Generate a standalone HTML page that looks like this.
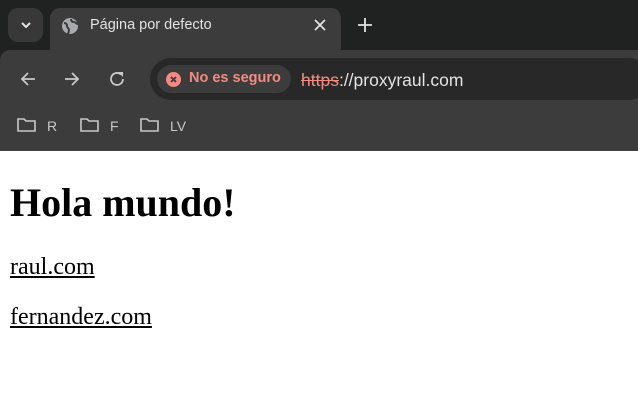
<!DOCTYPE html>
<html><head><style>
*{margin:0;padding:0;box-sizing:border-box}
body{width:638px;height:411px;overflow:hidden;background:#fff;position:relative;font-family:"Liberation Sans",sans-serif}
.top{position:absolute;left:0;top:0;width:638px;height:70px;background:#202121}
.dd{position:absolute;left:8px;top:8px;width:35px;height:34px;border-radius:10px;background:#383838}
.tab{position:absolute;left:50px;top:8px;width:291px;height:50px;border-radius:10px 10px 0 0;background:#3c3c3c}
.tb{position:absolute;left:0;top:50px;width:638px;height:100px;background:#3c3c3c;border-radius:10px 0 0 0}
.omni{position:absolute;left:150px;top:58px;width:500px;height:42px;border-radius:21px;background:#282828}
.chip{position:absolute;left:157px;top:65px;width:134px;height:28px;border-radius:14px;background:#3c3c3c}
.t{position:absolute;color:#e3e3e3;white-space:nowrap}
.line{position:absolute;left:0;top:150px;width:638px;height:1px;background:#444}
.page{position:absolute;font-family:"Liberation Serif",serif;color:#000;white-space:nowrap}
</style></head><body>
<div class="top"></div>
<div class="dd"></div>
<svg style="position:absolute;left:20px;top:19px" width="12" height="12"><path d="M2 4l4 4 4-4" stroke="#e3e3e3" stroke-width="2" fill="none"/></svg>
<div class="tb"></div>
<div class="tab"></div>
<svg style="position:absolute;left:61px;top:17px" width="18" height="18" viewBox="0 0 18 18"><circle cx="9" cy="9" r="8" fill="#a8abae"/><path d="M3 6c2 0 3 1 3 3s2 2 2 4-1 3-1 4M10 2c0 2 1 3 3 3s2 2 4 2" stroke="#3c3c3c" stroke-width="2" fill="none"/></svg>
<div class="t" style="left:90px;top:17px;font-size:14.5px">Página por defecto</div>
<svg style="position:absolute;left:314px;top:19px" width="12" height="12"><path d="M1 1l10 10M11 1L1 11" stroke="#e3e3e3" stroke-width="1.8"/></svg>
<svg style="position:absolute;left:358px;top:18px" width="14" height="14"><path d="M7 0v14M0 7h14" stroke="#e3e3e3" stroke-width="1.8"/></svg>
<svg style="position:absolute;left:19px;top:70px" width="18" height="18"><path d="M16 9H3M9 3L3 9l6 6" stroke="#c8c8c8" stroke-width="1.8" fill="none"/></svg>
<svg style="position:absolute;left:63px;top:70px" width="18" height="18"><path d="M2 9h13M9 3l6 6-6 6" stroke="#c8c8c8" stroke-width="1.8" fill="none"/></svg>
<svg style="position:absolute;left:108px;top:70px" width="18" height="18"><path d="M15 9a6 6 0 1 1-2-4.5" stroke="#c8c8c8" stroke-width="1.8" fill="none"/><path d="M10 2h5v5z" fill="#c8c8c8"/></svg>
<div class="omni"></div>
<div class="chip"></div>
<svg style="position:absolute;left:166px;top:72px" width="15" height="15"><circle cx="7.5" cy="7.5" r="7.5" fill="#f28b82"/><path d="M5 5l5 5M10 5l-5 5" stroke="#3c3c3c" stroke-width="1.8"/></svg>
<div class="t" style="left:189px;top:70px;font-size:14.5px;color:#f28b82;font-weight:bold">No es seguro</div>
<div class="t" style="left:301px;top:70px;font-size:17.5px"><span style="color:#f28b82;text-decoration:line-through">https</span>://proxyraul.com</div>
<svg style="position:absolute;left:17px;top:117px" width="20" height="16"><path d="M1 2h6l2 2h9v10H1z" stroke="#c8c8c8" stroke-width="1.6" fill="none"/></svg>
<div class="t" style="left:47px;top:118px;font-size:14px;color:#c8c8c8">R</div>
<svg style="position:absolute;left:80px;top:117px" width="20" height="16"><path d="M1 2h6l2 2h9v10H1z" stroke="#c8c8c8" stroke-width="1.6" fill="none"/></svg>
<div class="t" style="left:110px;top:118px;font-size:14px;color:#c8c8c8">F</div>
<svg style="position:absolute;left:140px;top:117px" width="20" height="16"><path d="M1 2h6l2 2h9v10H1z" stroke="#c8c8c8" stroke-width="1.6" fill="none"/></svg>
<div class="t" style="left:170px;top:118px;font-size:14px;color:#c8c8c8">LV</div>
<div class="line"></div>
<div class="page" style="left:10px;top:180px;font-size:40px;font-weight:bold;line-height:46px">Hola mundo!</div>
<div class="page" style="left:10px;top:253px;font-size:24px;line-height:28px;text-decoration:underline">raul.com</div>
<div class="page" style="left:10px;top:303px;font-size:24px;line-height:28px;text-decoration:underline">fernandez.com</div>
</body></html>
